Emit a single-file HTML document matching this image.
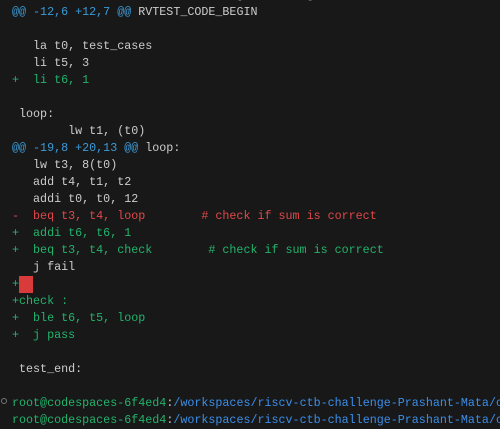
<!DOCTYPE html>
<html><head><meta charset="utf-8"><style>
html,body{margin:0;padding:0;background:#181818;width:500px;height:418px;overflow:hidden}
pre{position:absolute;left:12px;top:-13.5px;margin:0;font-family:"Liberation Mono",monospace;font-size:11.7px;line-height:17px;color:#cccccc;white-space:pre}
.b{color:#3b9bd8}.g{color:#23b26b}.r{color:#e04848}.p{color:#3b8eea}
.cur{display:inline-block;width:14px;height:17px;background:#d93a3a;vertical-align:top}
.dot{position:absolute;left:1px;top:398px;width:6px;height:6px;border-radius:50%;border:1.5px solid #777;box-sizing:border-box}
</style></head><body>
<pre><span style="color:#aaa">    la t0, t_st_cases   addi t0 g_t_d_s_c_g_t_  </span>
<span class="b">@@ -12,6 +12,7 @@</span> RVTEST_CODE_BEGIN

   la t0, test_cases
   li t5, 3
<span class="g">+  li t6, 1</span>

 loop:
        lw t1, (t0)
<span class="b">@@ -19,8 +20,13 @@</span> loop:
   lw t3, 8(t0)
   add t4, t1, t2
   addi t0, t0, 12
<span class="r">-  beq t3, t4, loop        # check if sum is correct</span>
<span class="g">+  addi t6, t6, 1</span>
<span class="g">+  beq t3, t4, check        # check if sum is correct</span>
   j fail
<span class="g">+</span><span class="cur"></span>
<span class="g">+check :</span>
<span class="g">+  ble t6, t5, loop</span>
<span class="g">+  j pass</span>

 test_end:

<span class="g">root@codespaces-6f4ed4</span>:<span class="p">/workspaces/riscv-ctb-challenge-Prashant-Mata/c</span>
<span class="g">root@codespaces-6f4ed4</span>:<span class="p">/workspaces/riscv-ctb-challenge-Prashant-Mata/c</span></pre>
<div class="dot"></div>
</body></html>
